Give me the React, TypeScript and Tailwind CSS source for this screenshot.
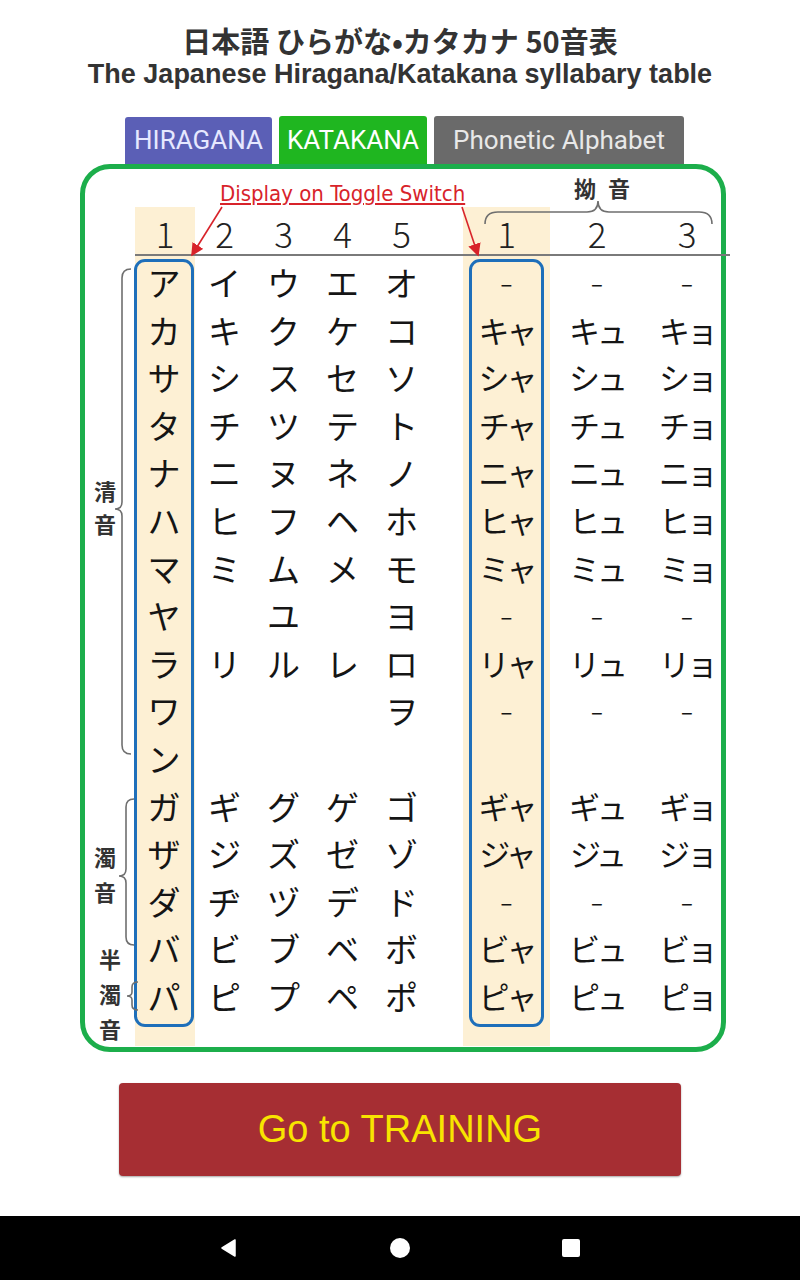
import React from 'react'

const SEION: string[][] = [
  ['ア', 'イ', 'ウ', 'エ', 'オ'],
  ['カ', 'キ', 'ク', 'ケ', 'コ'],
  ['サ', 'シ', 'ス', 'セ', 'ソ'],
  ['タ', 'チ', 'ツ', 'テ', 'ト'],
  ['ナ', 'ニ', 'ヌ', 'ネ', 'ノ'],
  ['ハ', 'ヒ', 'フ', 'ヘ', 'ホ'],
  ['マ', 'ミ', 'ム', 'メ', 'モ'],
  ['ヤ', '', 'ユ', '', 'ヨ'],
  ['ラ', 'リ', 'ル', 'レ', 'ロ'],
  ['ワ', '', '', '', 'ヲ'],
  ['ン', '', '', '', ''],
  ['ガ', 'ギ', 'グ', 'ゲ', 'ゴ'],
  ['ザ', 'ジ', 'ズ', 'ゼ', 'ゾ'],
  ['ダ', 'ヂ', 'ヅ', 'デ', 'ド'],
  ['バ', 'ビ', 'ブ', 'ベ', 'ボ'],
  ['パ', 'ピ', 'プ', 'ペ', 'ポ'],
]

const YOON: string[][] = [
  ['–', '–', '–'],
  ['キャ', 'キュ', 'キョ'],
  ['シャ', 'シュ', 'ショ'],
  ['チャ', 'チュ', 'チョ'],
  ['ニャ', 'ニュ', 'ニョ'],
  ['ヒャ', 'ヒュ', 'ヒョ'],
  ['ミャ', 'ミュ', 'ミョ'],
  ['–', '–', '–'],
  ['リャ', 'リュ', 'リョ'],
  ['–', '–', '–'],
  ['', '', ''],
  ['ギャ', 'ギュ', 'ギョ'],
  ['ジャ', 'ジュ', 'ジョ'],
  ['–', '–', '–'],
  ['ビャ', 'ビュ', 'ビョ'],
  ['ピャ', 'ピュ', 'ピョ'],
]

const JP = "font-['Noto_Sans_CJK_JP',sans-serif]"

// one column of the table: header number, then the 16 rows
const Column = ({
  num,
  cells,
  width,
  highlight,
  boxed,
  boxInset,
  yoon,
}: {
  num: string
  cells: string[]
  width: string
  highlight?: boolean
  boxed?: boolean
  boxInset?: string
  yoon?: boolean
}) => (
  <div className={`${width} shrink-0 flex flex-col ${highlight ? 'bg-[#fdf0d4]' : ''}`}>
    <div className="h-[49px] border-b-2 border-[#7a7a7a] flex items-center justify-center pt-[6px] text-[35px] text-[#222] font-['Noto_Sans_CJK_JP',sans-serif] font-light">
      {num}
    </div>
    <div className={`mt-[3px] ${boxInset ?? ''} border-[3px] ${boxed ? 'border-[#1e6fba] rounded-[11px]' : 'border-transparent'}`}>
      {cells.map((c, i) => (
        <div
          key={i}
          className={`h-[47.6px] leading-[40px] text-center text-[#151515] ${JP} ${
            c === '–' ? 'text-[22px] text-[#444]' : yoon ? 'text-[31px] tracking-[-3px]' : 'text-[33px]'
          }`}
        >
          {c}
        </div>
      ))}
    </div>
  </div>
)

export default function App() {
  return (
    <div className="w-[800px] h-[1280px] bg-white flex flex-col font-['Liberation_Sans',Arial,sans-serif]">
      {/* Title */}
      <div className="pt-[23px] flex flex-col items-center text-[#333]">
        <div className={`h-[34px] leading-[34px] text-[29px] font-bold whitespace-nowrap ${JP}`}>
          日本語 ひらがな•カタカナ 50音表
        </div>
        <div className="h-[34px] leading-[34px] text-[27px] font-bold whitespace-nowrap font-['Liberation_Sans',Arial,sans-serif]">
          The Japanese Hiragana/Katakana syllabary table
        </div>
      </div>

      {/* Tabs */}
      <div className="mt-[25px] pl-[125px] flex items-end gap-[7px] font-['Roboto',sans-serif] text-[26px]">
        <div className="w-[147px] h-[47px] bg-[#5b5fb6] rounded-t-[3px] flex items-center justify-center text-[#e6e8ff]">
          HIRAGANA
        </div>
        <div className="w-[148px] h-[48px] bg-[#1fb620] rounded-t-[3px] flex items-center justify-center text-white">
          KATAKANA
        </div>
        <div className="w-[250px] h-[48px] bg-[#6a6a6a] rounded-t-[3px] flex items-center justify-center text-[#e8e8e8]">
          Phonetic Alphabet
        </div>
      </div>

      {/* Table box */}
      <div className="ml-[80px] w-[646px] h-[888px] border-[5px] border-[#1cae4b] rounded-[30px]">
        <div className="relative w-full h-full">
          {/* annotation row */}
          <div className="h-[38px] flex items-start">
            <div className="ml-[135px] mt-[13px] w-[245px] h-[24px] leading-[24px] text-[22px] text-[#d8232a] text-center whitespace-nowrap underline decoration-2 underline-offset-[2px] font-['DejaVu_Sans_Condensed','Liberation_Sans',sans-serif]">
              Display on Toggle Switch
            </div>
            <div className={`ml-[97px] mt-[5px] w-[70px] h-[26px] leading-[26px] text-[22px] font-bold text-[#333] text-center whitespace-nowrap tracking-[12px] pl-[12px] ${JP}`}>
              拗音
            </div>
          </div>

          {/* columns */}
          <div className="flex">
            <div className={`w-[50px] shrink-0 flex flex-col text-[22px] font-bold text-[#333] leading-[33px] ${JP}`}>
              <div className="mt-[267px] ml-[9px] w-[22px] text-center">
                清<br />音
              </div>
              <div className="mt-[299px] ml-[9px] w-[22px] text-center leading-[35px]">
                濁<br />音
              </div>
              <div className="mt-[32px] ml-[14px] w-[22px] text-center leading-[35px]">
                半<br />濁<br />音
              </div>
            </div>
            <Column num="1" cells={SEION.map((r) => r[0])} width="w-[60px]" highlight boxed boxInset="-ml-[1px] mr-[1px]" />
            <Column num="2" cells={SEION.map((r) => r[1])} width="w-[59px]" />
            <Column num="3" cells={SEION.map((r) => r[2])} width="w-[59px]" />
            <Column num="4" cells={SEION.map((r) => r[3])} width="w-[59px]" />
            <Column num="5" cells={SEION.map((r) => r[4])} width="w-[59px]" />
            <div className="w-[32px] shrink-0">
              <div className="h-[49px] border-b-2 border-[#7a7a7a]" />
            </div>
            <Column num="1" cells={YOON.map((r) => r[0])} width="w-[87px]" highlight boxed boxInset="mx-[6px]" yoon />
            <Column num="2" cells={YOON.map((r) => r[1])} width="w-[94px]" yoon />
            <Column num="3" cells={YOON.map((r) => r[2])} width="w-[86px]" yoon />
          </div>

          {/* brackets and arrows */}
          <svg className="absolute left-0 top-0 pointer-events-none overflow-visible" width="636" height="878">
            <defs>
              <marker id="ah" markerWidth="8" markerHeight="8" refX="7" refY="4" orient="auto">
                <path d="M0,0 L8,4 L0,8 z" fill="#d8232a" />
              </marker>
            </defs>
            <g transform="translate(-85,-170)" fill="none">
              <g stroke="#6f6f6f" strokeWidth="1.6">
                <path d="M131 270 Q122 270 122 279 L122 503 Q122 510 115 510 Q122 510 122 517 L122 746 Q122 755 131 755" />
                <path d="M134 800 Q126 800 126 808 L126 870 Q126 877 119 877 Q126 877 126 884 L126 938 Q126 946 134 946" />
                <path d="M138 983 Q132 983 132 988 L132 993 Q132 997 127 997 Q132 997 132 1001 L132 1006 Q132 1011 138 1011" />
                <path d="M485 225 Q485 213 498 213 L587 213 Q598 213 598 202 Q598 213 609 213 L699 213 Q712 213 712 225" />
              </g>
              <g stroke="#d8232a" strokeWidth="1.6">
                <line x1="222" y1="208" x2="192" y2="256" markerEnd="url(#ah)" />
                <line x1="462" y1="208" x2="478" y2="256" markerEnd="url(#ah)" />
              </g>
            </g>
          </svg>
        </div>
      </div>

      {/* Training button */}
      <div className="mt-[31px] ml-[119px] w-[562px] h-[93px] bg-[#a62e33] rounded-[4px] shadow-[0_1px_2px_rgba(0,0,0,0.35)] flex items-center justify-center">
        <span className="text-[38px] text-[#f8e400] font-['Liberation_Sans',Arial,sans-serif]">Go to TRAINING</span>
      </div>

      {/* Android nav bar */}
      <div className="mt-auto h-[64px] bg-black flex items-center justify-center gap-[150px]">
        <svg width="20" height="20" viewBox="0 0 20 20">
          <path d="M16 2 L16 18 L3 10 Z" fill="#fff" stroke="#fff" strokeWidth="1.5" strokeLinejoin="round" />
        </svg>
        <svg width="22" height="22" viewBox="0 0 22 22">
          <circle cx="11" cy="11" r="10" fill="#fff" />
        </svg>
        <svg width="20" height="20" viewBox="0 0 20 20">
          <rect x="1" y="1" width="18" height="18" rx="2" fill="#fff" />
        </svg>
      </div>
    </div>
  )
}
